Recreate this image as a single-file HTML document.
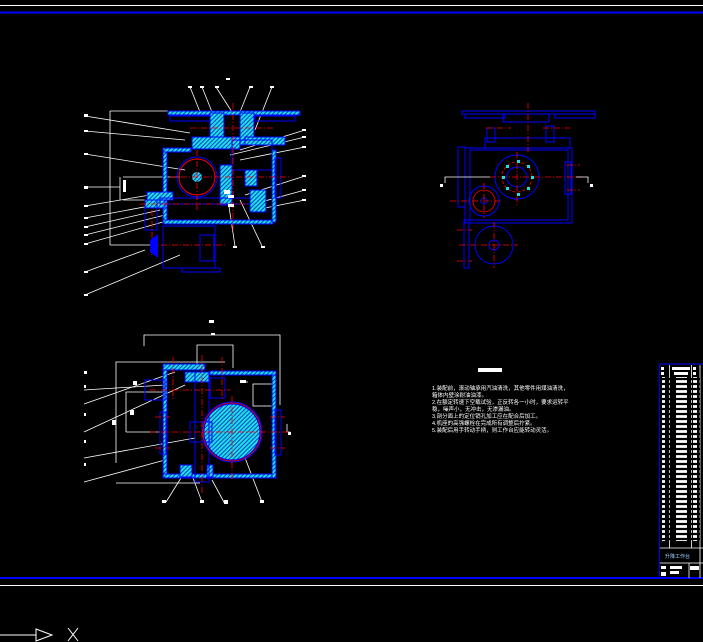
<!DOCTYPE html>
<html><head><meta charset="utf-8"><style>
html,body{margin:0;padding:0;background:#000;width:703px;height:642px;overflow:hidden}
svg{display:block}
.t{font-family:"Liberation Sans","Noto Sans CJK SC",sans-serif;font-size:5.5px;fill:#fff}
</style></head><body>
<svg width="703" height="642" viewBox="0 0 703 642" xmlns="http://www.w3.org/2000/svg">
<defs>
<pattern id="h" width="3" height="3" patternUnits="userSpaceOnUse" patternTransform="rotate(45)">
<rect width="3" height="3" fill="#1ee0e0"/><rect width="1" height="3" fill="#0a40d0"/>
</pattern>
</defs>
<rect width="703" height="642" fill="#000"/>
<line x1="0" y1="5.5" x2="703" y2="5.5" stroke="#fff" stroke-width="1"/>
<line x1="0" y1="12.5" x2="703" y2="12.5" stroke="#00f" stroke-width="2"/>
<line x1="0" y1="578" x2="703" y2="578" stroke="#00f" stroke-width="2"/>
<line x1="0" y1="585.5" x2="703" y2="585.5" stroke="#fff" stroke-width="1"/>
<line x1="0" y1="635" x2="36" y2="635" stroke="#fff"/>
<path d="M36 629 L36 641 L52 635 Z" fill="none" stroke="#fff"/>
<path d="M68 628 L78 641 M78 628 L68 641" stroke="#fff"/>

<g>
<g stroke="#fff" stroke-width="0.8" fill="none">
<line x1="110" y1="111" x2="110" y2="245"/>
<line x1="110" y1="111" x2="170" y2="111"/>
<line x1="110" y1="245" x2="150" y2="245"/>
<line x1="85" y1="116" x2="190" y2="133"/>
<line x1="85" y1="131" x2="185" y2="140"/>
<line x1="85" y1="154" x2="185" y2="170"/>
<line x1="85" y1="187" x2="120" y2="187"/>
<line x1="85" y1="206" x2="150" y2="195"/>
<line x1="85" y1="218" x2="155" y2="205"/>
<line x1="85" y1="227" x2="160" y2="210"/>
<line x1="85" y1="235" x2="165" y2="215"/>
<line x1="85" y1="244" x2="170" y2="220"/>
<line x1="85" y1="272" x2="145" y2="250"/>
<line x1="85" y1="295" x2="180" y2="255"/>
<line x1="190" y1="87" x2="200" y2="112"/>
<line x1="202" y1="87" x2="212" y2="112"/>
<line x1="216" y1="87" x2="232" y2="112"/>
<line x1="250" y1="87" x2="240" y2="112"/>
<line x1="272" y1="87" x2="255" y2="130"/>
<line x1="305" y1="130" x2="240" y2="150"/>
<line x1="305" y1="137" x2="230" y2="155"/>
<line x1="305" y1="147" x2="240" y2="160"/>
<line x1="305" y1="176" x2="245" y2="195"/>
<line x1="305" y1="190" x2="250" y2="205"/>
<line x1="305" y1="200" x2="255" y2="210"/>
<line x1="120" y1="177" x2="120" y2="200"/>
<line x1="123" y1="177" x2="180" y2="177"/>
<line x1="123" y1="200" x2="165" y2="200"/>
<line x1="228" y1="200" x2="235" y2="246"/>
<line x1="240" y1="200" x2="262" y2="246"/>
</g>
<g fill="url(#h)" stroke="#00f" stroke-width="1">
<rect x="168" y="111" width="132" height="4"/>
<rect x="210" y="113" width="14" height="32"/>
<rect x="240" y="113" width="14" height="32"/>
<rect x="192" y="137" width="48" height="12"/>
<rect x="245" y="137" width="40" height="8"/>
<rect x="163" y="148" width="4" height="72"/>
<rect x="163" y="148" width="28" height="4"/>
<rect x="163" y="220" width="110" height="4"/>
<rect x="272" y="150" width="4" height="72"/>
<rect x="220" y="165" width="12" height="40"/>
<rect x="245" y="170" width="12" height="16"/>
<rect x="250" y="190" width="16" height="22"/>
<rect x="147" y="192" width="26" height="8"/>
<rect x="145" y="200" width="20" height="8"/>
</g>
<g fill="none" stroke="#00f" stroke-width="1">
<rect x="170" y="116" width="40" height="5"/>
<rect x="255" y="116" width="40" height="5"/>
<rect x="232" y="140" width="40" height="30"/>
<rect x="160" y="198" width="90" height="6"/>
<rect x="163" y="226" width="52" height="42"/>
<rect x="182" y="268" width="38" height="4"/>
<rect x="200" y="235" width="14" height="26"/>
<rect x="145" y="200" width="12" height="30"/>
<circle cx="197" cy="177" r="20"/>
<rect x="275" y="158" width="6" height="40"/>
</g>
<circle cx="197" cy="177" r="18" fill="none" stroke="#f00" stroke-width="1"/>
<circle cx="197" cy="177" r="5" fill="url(#h)"/>
<g stroke="#f00" stroke-width="0.8" stroke-dasharray="6,2,1,2">
<line x1="233" y1="103" x2="233" y2="232"/>
<line x1="170" y1="177" x2="290" y2="177"/>
<line x1="197" y1="150" x2="197" y2="210"/>
<line x1="140" y1="204" x2="250" y2="204"/>
<line x1="190" y1="128" x2="275" y2="128"/>
<line x1="150" y1="245" x2="225" y2="245"/>
<line x1="152" y1="210" x2="152" y2="255"/>
</g>
<path d="M150 240 L158 234 L158 258 L150 252Z" fill="#00f"/>
<g fill="#fff">
<rect x="226" y="78" width="4" height="2"/>
<rect x="188" y="86" width="4" height="2"/><rect x="200" y="86" width="4" height="2"/><rect x="215" y="86" width="4" height="2"/><rect x="249" y="86" width="4" height="2"/><rect x="270" y="86" width="4" height="2"/>
<rect x="84" y="114" width="4" height="3"/><rect x="84" y="130" width="4" height="2"/><rect x="84" y="153" width="4" height="2"/><rect x="84" y="186" width="4" height="3"/><rect x="84" y="205" width="4" height="2"/><rect x="84" y="217" width="4" height="2"/><rect x="84" y="226" width="4" height="2"/><rect x="84" y="234" width="4" height="2"/><rect x="84" y="243" width="4" height="2"/><rect x="84" y="271" width="4" height="2"/><rect x="84" y="294" width="4" height="2"/>
<rect x="302" y="129" width="4" height="2"/><rect x="302" y="136" width="4" height="2"/><rect x="302" y="146" width="4" height="2"/><rect x="302" y="175" width="4" height="2"/><rect x="302" y="189" width="4" height="2"/><rect x="302" y="199" width="4" height="2"/>
<rect x="224" y="190" width="6" height="4"/><rect x="228" y="195" width="6" height="3"/><rect x="228" y="204" width="6" height="3"/>
<rect x="233" y="246" width="4" height="2"/><rect x="261" y="246" width="4" height="2"/>
<rect x="123" y="180" width="3" height="12"/>
</g>
</g>

<g>
<g stroke="#fff" stroke-width="0.8" fill="none">
<polyline points="144,346 144,335 280,335 280,405"/>
<polyline points="197,368 197,345 233,345 233,368"/>
<polyline points="116,463 116,362 225,362"/>
<line x1="116" y1="483" x2="200" y2="483"/>
<polyline points="126,432 126,392 165,392"/>
<line x1="126" y1="432" x2="160" y2="432"/>
<line x1="84" y1="390" x2="165" y2="385"/>
<line x1="84" y1="404" x2="175" y2="372"/>
<line x1="84" y1="432" x2="185" y2="385"/>
<line x1="84" y1="458" x2="195" y2="438"/>
<line x1="84" y1="482" x2="165" y2="460"/>
<line x1="166" y1="502" x2="186" y2="470"/>
<line x1="202" y1="502" x2="190" y2="470"/>
<line x1="225" y1="504" x2="212" y2="480"/>
<line x1="262" y1="502" x2="242" y2="450"/>
<rect x="253" y="384" width="22" height="22"/>
<polyline points="287,424 287,432 290,432"/>
<line x1="240" y1="382" x2="248" y2="382"/>
</g>
<g fill="url(#h)" stroke="#00f" stroke-width="1">
<rect x="163" y="364" width="4" height="114"/>
<rect x="163" y="474" width="112" height="4"/>
<rect x="272" y="371" width="4" height="107"/>
<rect x="210" y="371" width="66" height="4"/>
<rect x="163" y="364" width="42" height="6"/>
<rect x="185" y="372" width="24" height="10"/>
<rect x="180" y="465" width="12" height="12"/>
<rect x="207" y="465" width="6" height="12"/>
<circle cx="232" cy="432" r="28"/>
</g>
<g fill="none" stroke="#00f" stroke-width="1">
<rect x="145" y="380" width="20" height="20"/>
<rect x="210" y="378" width="15" height="20"/>
<rect x="195" y="372" width="14" height="110"/>
<rect x="190" y="422" width="22" height="20"/>
<rect x="275" y="410" width="6" height="45"/>
<rect x="160" y="412" width="6" height="42"/>
<circle cx="232" cy="432" r="30"/>
</g>
<circle cx="232" cy="432" r="29" fill="none" stroke="#f00" stroke-width="0.8"/>
<g stroke="#f00" stroke-width="0.8" stroke-dasharray="6,2,1,2">
<line x1="150" y1="390" x2="230" y2="390"/>
<line x1="150" y1="432" x2="290" y2="432"/>
<line x1="232" y1="396" x2="232" y2="480"/>
<line x1="202" y1="355" x2="202" y2="495"/>
<line x1="173" y1="357" x2="173" y2="400"/>
<line x1="222" y1="357" x2="222" y2="400"/>
<line x1="155" y1="417" x2="170" y2="417"/>
<line x1="155" y1="448" x2="170" y2="448"/>
<line x1="270" y1="417" x2="285" y2="417"/>
<line x1="270" y1="448" x2="285" y2="448"/>
</g>
<g fill="#fff">
<rect x="209" y="320" width="5" height="3"/><rect x="211" y="333" width="4" height="2"/>
<rect x="84" y="371" width="3" height="3"/><rect x="84" y="385" width="2" height="3"/><rect x="84" y="413" width="2" height="3"/><rect x="84" y="440" width="2" height="3"/><rect x="84" y="463" width="2" height="3"/>
<rect x="130" y="410" width="4" height="5"/><rect x="112" y="420" width="4" height="5"/><rect x="133" y="381" width="4" height="4"/>
<rect x="162" y="500" width="4" height="3"/><rect x="200" y="500" width="4" height="3"/><rect x="224" y="500" width="4" height="4"/><rect x="260" y="500" width="4" height="3"/><rect x="288" y="432" width="3" height="3"/>
<rect x="240" y="380" width="6" height="3"/>
</g>
</g>

<g fill="none" stroke="#00f" stroke-width="1">
<rect x="462" y="111" width="133" height="3"/>
<rect x="465" y="114" width="40" height="4"/>
<rect x="555" y="114" width="40" height="4"/>
<rect x="503" y="114" width="46" height="8"/>
<rect x="487" y="128" width="8" height="14"/>
<rect x="546" y="126" width="8" height="16"/>
<rect x="485" y="138" width="85" height="10"/>
<rect x="465" y="148" width="107" height="75"/>
<rect x="470" y="150" width="98" height="70"/>
<rect x="458" y="147" width="7" height="60"/>
<rect x="565" y="162" width="6" height="32"/>
<circle cx="517" cy="177" r="22"/>
<circle cx="517" cy="177" r="10"/>
<circle cx="484" cy="201" r="15"/>
<circle cx="484" cy="201" r="3"/>
<circle cx="494" cy="245" r="19"/>
<circle cx="494" cy="245" r="5"/>
<rect x="464" y="220" width="5" height="48"/>
</g>
<circle cx="517" cy="177" r="15" fill="none" stroke="#f00" stroke-width="0.8" stroke-dasharray="3,2"/>
<circle cx="484" cy="201" r="11" fill="none" stroke="#f00" stroke-width="0.8"/>
<g stroke="#f00" stroke-width="0.8" stroke-dasharray="6,2,1,2">
<line x1="528" y1="103" x2="528" y2="152"/>
<line x1="517" y1="152" x2="517" y2="205"/>
<line x1="490" y1="177" x2="582" y2="177"/>
<line x1="450" y1="201" x2="502" y2="201"/>
<line x1="459" y1="245" x2="518" y2="245"/>
<line x1="494" y1="222" x2="494" y2="268"/>
<line x1="484" y1="183" x2="484" y2="218"/>
<line x1="486" y1="128" x2="511" y2="128"/>
<line x1="543" y1="128" x2="570" y2="128"/>
<line x1="457" y1="230" x2="472" y2="230"/>
<line x1="457" y1="261" x2="472" y2="261"/>
<line x1="567" y1="165" x2="580" y2="165"/>
<line x1="567" y1="190" x2="580" y2="190"/>
</g>
<g stroke="#fff" stroke-width="0.8" fill="none">
<polyline points="445,183 445,177 490,177"/>
<polyline points="588,183 588,177 576,177"/>
</g>
<g fill="#fff"><rect x="440" y="184" width="3" height="3"/><rect x="590" y="184" width="3" height="3"/></g>
<g fill="#1ee0e0"><rect x="517" y="160" width="3" height="3"/><rect x="502" y="176" width="3" height="3"/><rect x="531" y="176" width="3" height="3"/><rect x="517" y="193" width="3" height="3"/><rect x="506" y="165" width="3" height="3"/><rect x="527" y="165" width="3" height="3"/><rect x="506" y="187" width="3" height="3"/><rect x="527" y="187" width="3" height="3"/></g>

<rect x="478" y="368" width="24" height="4" fill="#fff"/>
<text class="t" x="432" y="390">1.装配前，滚动轴承用汽油清洗，其他零件用煤油清洗，</text>
<text class="t" x="432" y="397">箱体内壁涂耐油油漆。</text>
<text class="t" x="432" y="404">2.在额定转速下空载试验，正反转各一小时，要求运转平</text>
<text class="t" x="432" y="411">稳，噪声小，无冲击，无渗漏油。</text>
<text class="t" x="432" y="418">3.剖分面上的定位销孔加工应在配合后加工。</text>
<text class="t" x="432" y="425">4.机座的高强螺栓在完成所有调整后拧紧。</text>
<text class="t" x="432" y="432">5.装配后用手转动手柄，则工作台应能转动灵活。</text>

<line x1="659" y1="364" x2="703" y2="364" stroke="#00f" stroke-width="1"/>
<line x1="659.5" y1="364" x2="659.5" y2="578" stroke="#00f" stroke-width="1"/>
<g stroke="#fff" stroke-width="0.8">
<line x1="669.5" y1="365" x2="669.5" y2="548"/>
<line x1="691.5" y1="365" x2="691.5" y2="548"/>
<line x1="700" y1="365" x2="700" y2="578"/>
<line x1="660" y1="548" x2="703" y2="548"/>
<line x1="660" y1="563" x2="703" y2="563"/>
<line x1="689" y1="563" x2="689" y2="578"/>
</g>
<g fill="#fff">
<path d="M661 367h3v3h-3zM672 367h18v3h-18zM693 367h3v3h-3zM661 372h3v3h-3zM674 372h14v3h-14zM693 372h3v3h-3z"/>
</g>
<g fill="#fff">
<rect x="662" y="377" width="3" height="164"/>
<rect x="676" y="377" width="11" height="164"/>
<rect x="693" y="377" width="4" height="164"/>
</g>
<g stroke="#000" stroke-width="2.2">
<line x1="660" y1="379" x2="700" y2="379"/><line x1="660" y1="384" x2="700" y2="384"/><line x1="660" y1="389" x2="700" y2="389"/><line x1="660" y1="394" x2="700" y2="394"/><line x1="660" y1="399" x2="700" y2="399"/><line x1="660" y1="404" x2="700" y2="404"/><line x1="660" y1="409" x2="700" y2="409"/><line x1="660" y1="414" x2="700" y2="414"/><line x1="660" y1="419" x2="700" y2="419"/><line x1="660" y1="424" x2="700" y2="424"/><line x1="660" y1="429" x2="700" y2="429"/><line x1="660" y1="434" x2="700" y2="434"/><line x1="660" y1="439" x2="700" y2="439"/><line x1="660" y1="444" x2="700" y2="444"/><line x1="660" y1="449" x2="700" y2="449"/><line x1="660" y1="454" x2="700" y2="454"/><line x1="660" y1="459" x2="700" y2="459"/><line x1="660" y1="464" x2="700" y2="464"/><line x1="660" y1="469" x2="700" y2="469"/><line x1="660" y1="474" x2="700" y2="474"/><line x1="660" y1="479" x2="700" y2="479"/><line x1="660" y1="484" x2="700" y2="484"/><line x1="660" y1="489" x2="700" y2="489"/><line x1="660" y1="494" x2="700" y2="494"/><line x1="660" y1="499" x2="700" y2="499"/><line x1="660" y1="504" x2="700" y2="504"/><line x1="660" y1="509" x2="700" y2="509"/><line x1="660" y1="514" x2="700" y2="514"/><line x1="660" y1="519" x2="700" y2="519"/><line x1="660" y1="524" x2="700" y2="524"/><line x1="660" y1="529" x2="700" y2="529"/><line x1="660" y1="534" x2="700" y2="534"/><line x1="660" y1="539" x2="700" y2="539"/>
</g>
<text x="665" y="558" style="font-family:'Liberation Sans','Noto Sans CJK SC',sans-serif;font-size:5px;fill:#9cf">升降工作台</text>
<g fill="#fff"><rect x="661" y="566" width="5" height="3"/><rect x="670" y="566" width="12" height="3"/><rect x="661" y="572" width="5" height="4"/><rect x="670" y="571" width="9" height="3"/><rect x="690" y="566" width="9" height="4"/></g>
</svg>
</body></html>
